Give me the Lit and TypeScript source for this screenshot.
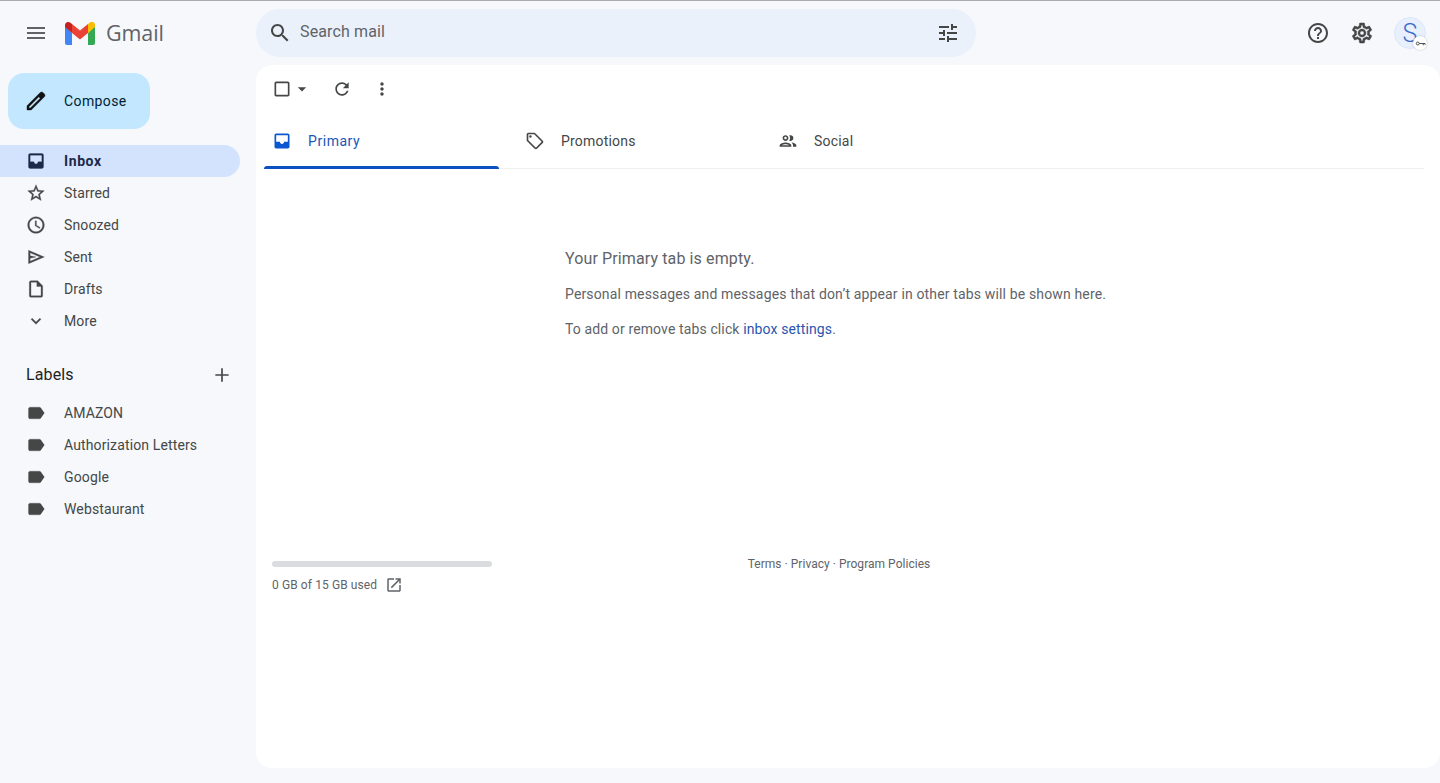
import { LitElement, html, css, svg } from "lit";
import { customElement } from "lit/decorators.js";

const ic = (d: string, size = 24, cls = "") => html`<svg class=${cls} width=${size} height=${size} viewBox="0 0 24 24" fill="currentColor">${svg`<path d=${d}></path>`}</svg>`;

const P = {
  menu: "M3 18h18v-2H3v2zm0-5h18v-2H3v2zm0-7v2h18V6H3z",
  pencil: "M20.41 4.94l-1.35-1.35c-.78-.78-2.05-.78-2.83 0L3 16.82V21h4.18L20.41 7.77c.79-.78.79-2.05 0-2.83zM6.41 19.06L5 19v-1.36l9.82-9.82 1.41 1.41-9.82 9.83z",
  inboxFilled: "M19 3H5c-1.1 0-2 .9-2 2v14c0 1.1.9 2 2 2h14c1.1 0 2-.9 2-2V5c0-1.1-.9-2-2-2zm0 10h-4.5c0 1.38-1.12 2.5-2.5 2.5S9.5 14.38 9.5 13H5V5h14v8z",
  star: "M22 9.24l-7.19-.62L12 2 9.19 8.63 2 9.24l5.46 4.73L5.82 21 12 17.27 18.18 21l-1.63-7.03L22 9.24zM12 15.4l-3.76 2.27 1-4.28-3.32-2.88 4.38-.38L12 6.1l1.71 4.04 4.38.38-3.32 2.88 1 4.28L12 15.4z",
  clock: "M11.99 2C6.47 2 2 6.48 2 12s4.47 10 9.99 10C17.52 22 22 17.52 22 12S17.52 2 11.99 2zM12 20c-4.42 0-8-3.58-8-8s3.58-8 8-8 8 3.58 8 8-3.58 8-8 8zm.5-13H11v6l5.25 3.15.75-1.23-4.5-2.67z",
  send: "M3 4v16l19-8L3 4zm2 3.03L16.85 12 5 16.97V13.5l7-1.5-7-1.5V7.03z",
  draft: "M14 2H6c-1.1 0-2 .9-2 2v16c0 1.1.9 2 2 2h12c1.1 0 2-.9 2-2V8l-6-6zm4 18H6V4h7v5h5v11z",
  chevron: "M7.41 8.59L12 13.17l4.59-4.58L18 10l-6 6-6-6 1.41-1.41z",
  plus: "M20 13h-7v7h-2v-7H4v-2h7V4h2v7h7v2z",
  label: "M17.63 5.84C17.27 5.33 16.67 5 16 5L5 5.01C3.9 5.01 3 5.9 3 7v10c0 1.1.9 1.99 2 1.99L16 19c.67 0 1.27-.33 1.63-.84L22 12l-4.37-6.16z",
  search: "M15.5 14h-.79l-.28-.27C15.41 12.59 16 11.11 16 9.5 16 5.91 13.09 3 9.5 3S3 5.91 3 9.5 5.91 16 9.5 16c1.61 0 3.09-.59 4.23-1.57l.27.28v.79l5 4.99L20.49 19l-4.99-5zm-6 0C7.01 14 5 11.99 5 9.5S7.01 5 9.5 5 14 7.01 14 9.5 11.99 14 9.5 14z",
  tune: "M3 17v2h6v-2H3zM3 5v2h10V5H3zm10 16v-2h8v-2h-8v-2h-2v6h2zM7 9v2H3v2h4v2h2V9H7zm14 4v-2H11v2h10zm-6-4h2V7h4V5h-4V3h-2v6z",
  help: "M11 18h2v-2h-2v2zm1-16C6.48 2 2 6.48 2 12s4.48 10 10 10 10-4.48 10-10S17.52 2 12 2zm0 18c-4.41 0-8-3.59-8-8s3.59-8 8-8 8 3.59 8 8-3.59 8-8 8zm0-14c-2.21 0-4 1.79-4 4h2c0-1.1.9-2 2-2s2 .9 2 2c0 2-3 1.75-3 5h2c0-2.25 3-2.5 3-5 0-2.21-1.79-4-4-4z",
  gear: "M19.43 12.98c.04-.32.07-.64.07-.98 0-.34-.03-.66-.07-.98l2.11-1.65c.19-.15.24-.42.12-.64l-2-3.46c-.09-.16-.26-.25-.44-.25-.06 0-.12.01-.17.03l-2.49 1c-.52-.4-1.08-.73-1.69-.98l-.38-2.65C14.46 2.18 14.25 2 14 2h-4c-.25 0-.46.18-.49.42l-.38 2.65c-.61.25-1.17.59-1.69.98l-2.49-1c-.06-.02-.12-.03-.18-.03-.17 0-.34.09-.43.25l-2 3.46c-.13.22-.07.49.12.64l2.11 1.65c-.04.32-.07.65-.07.98 0 .33.03.66.07.98l-2.11 1.65c-.19.15-.24.42-.12.64l2 3.46c.09.16.26.25.44.25.06 0 .12-.01.17-.03l2.49-1c.52.4 1.08.73 1.69.98l.38 2.65c.03.24.24.42.49.42h4c.25 0 .46-.18.49-.42l.38-2.65c.61-.25 1.17-.59 1.69-.98l2.49 1c.06.02.12.03.18.03.17 0 .34-.09.43-.25l2-3.46c.12-.22.07-.49-.12-.64l-2.11-1.65zm-1.98-1.71c.04.31.05.52.05.73 0 .21-.02.43-.05.73l-.14 1.13.89.7 1.08.84-.7 1.21-1.27-.51-1.04-.42-.9.68c-.43.32-.84.56-1.25.73l-1.06.43-.16 1.13-.2 1.35h-1.4l-.19-1.35-.16-1.13-1.06-.43c-.43-.18-.83-.41-1.23-.71l-.91-.7-1.06.43-1.27.51-.7-1.21 1.08-.84.89-.7-.14-1.13c-.03-.31-.05-.54-.05-.74s.02-.43.05-.73l.14-1.13-.89-.7-1.08-.84.7-1.21 1.27.51 1.04.42.9-.68c.43-.32.84-.56 1.25-.73l1.06-.43.16-1.13.2-1.35h1.39l.19 1.35.16 1.13 1.06.43c.43.18.83.41 1.23.71l.91.7 1.06-.43 1.27-.51.7 1.21-1.07.85-.89.7.14 1.13zM12 8c-2.21 0-4 1.79-4 4s1.79 4 4 4 4-1.79 4-4-1.79-4-4-4zm0 6c-1.1 0-2-.9-2-2s.9-2 2-2 2 .9 2 2-.9 2-2 2z",
  checkbox: "M19 5v14H5V5h14m0-2H5c-1.1 0-2 .9-2 2v14c0 1.1.9 2 2 2h14c1.1 0 2-.9 2-2V5c0-1.1-.9-2-2-2z",
  caret: "M7 10l5 5 5-5z",
  refresh: "M17.65 6.35C16.2 4.9 14.21 4 12 4c-4.42 0-7.99 3.58-7.99 8s3.57 8 7.99 8c3.73 0 6.84-2.55 7.73-6h-2.08c-.82 2.33-3.04 4-5.65 4-3.31 0-6-2.69-6-6s2.69-6 6-6c1.66 0 3.14.69 4.22 1.78L13 11h7V4l-2.35 2.35z",
  more: "M12 8c1.1 0 2-.9 2-2s-.9-2-2-2-2 .9-2 2 .9 2 2 2zm0 2c-1.1 0-2 .9-2 2s.9 2 2 2 2-.9 2-2-.9-2-2-2zm0 6c-1.1 0-2 .9-2 2s.9 2 2 2 2-.9 2-2-.9-2-2-2z",
  tag: "M21.41 11.58l-9-9C12.05 2.22 11.55 2 11 2H4c-1.1 0-2 .9-2 2v7c0 .55.22 1.05.59 1.42l9 9c.36.36.86.58 1.41.58s1.05-.22 1.41-.59l7-7c.37-.36.59-.86.59-1.41s-.23-1.06-.59-1.42zM13 20.01L4 11V4h7v-.01l9 9-7 7.02zM6.5 8A1.5 1.5 0 1 0 6.5 5a1.5 1.5 0 0 0 0 3z",
  people: "M9 13.75c-2.34 0-7 1.17-7 3.5V19h14v-1.75c0-2.33-4.66-3.5-7-3.5zM4.34 17c.84-.58 2.87-1.25 4.66-1.25s3.82.67 4.66 1.25H4.34zM9 12c1.93 0 3.5-1.57 3.5-3.5S10.93 5 9 5 5.5 6.57 5.5 8.5 7.07 12 9 12zm0-5c.83 0 1.5.67 1.5 1.5S9.83 10 9 10s-1.5-.67-1.5-1.5S8.17 7 9 7zm7.04 6.81c1.16.84 1.96 1.96 1.96 3.44V19h4v-1.75c0-2.02-3.5-3.17-5.96-3.44zM15 12c1.93 0 3.5-1.57 3.5-3.5S16.93 5 15 5c-.54 0-1.04.13-1.5.35.63.89 1 1.98 1 3.15s-.37 2.26-1 3.15c.46.22.96.35 1.5.35z",
  open: "M19 19H5V5h7V3H5c-1.1 0-2 .9-2 2v14c0 1.1.9 2 2 2h14c1.1 0 2-.9 2-2v-7h-2v7zM14 3v2h3.59l-9.83 9.83 1.41 1.41L19 6.41V10h2V3h-7z",
};

const NAV: [string, string, boolean][] = [
  ["Inbox", P.inboxFilled, true],
  ["Starred", P.star, false],
  ["Snoozed", P.clock, false],
  ["Sent", P.send, false],
  ["Drafts", P.draft, false],
  ["More", P.chevron, false],
];
const LABELS = ["AMAZON", "Authorization Letters", "Google", "Webstaurant"];

@customElement("app-root")
export class AppRoot extends LitElement {
  static styles = css`
    :host { display: block; height: 783px; overflow: hidden; background: #f6f8fc; font-family: Roboto, "Liberation Sans", sans-serif; color: #444746; font-size: 14px; letter-spacing: 0.13px; }
    .shell { display: grid; grid-template-columns: 256px 1fr; height: 782px; border-top: 1px solid #a9abae; }
    svg { display: block; flex: none; }

    .side { display: flex; flex-direction: column; }
    .brand { display: flex; align-items: center; height: 64px; padding-left: 24px; }
    .menu { color: #5f6368; }
    .logo { margin-left: 17px; }
    .word { margin-left: 11px; font-size: 21.5px; color: #5f6368; letter-spacing: -0.1px; font-family: "Open Sans", Roboto, sans-serif; line-height: 1; padding-bottom: 1px; }
    .compose { display: flex; align-items: center; width: 142px; height: 56px; margin: 8px 0 16px 8px; border-radius: 16px; background: #c2e7ff; color: #001d35; font-weight: 400; padding-left: 16px; box-sizing: border-box; gap: 16px; letter-spacing: 0.4px; }
    .compose svg { color: #111; stroke: currentColor; stroke-width: 0.4; }
    .nav { display: flex; flex-direction: column; }
    .row { display: flex; align-items: center; height: 32px; padding-left: 26px; gap: 18px; width: 240px; box-sizing: border-box; border-radius: 0 16px 16px 0; color: #444746; }
    .row svg { stroke: currentColor; stroke-width: 0.35; }
    .row.active { background: #d3e3fd; color: #1b2a49; font-weight: 700; letter-spacing: 0.6px; }
    .labels-head { display: flex; align-items: center; justify-content: space-between; height: 40px; margin-top: 17px; margin-bottom: 3px; padding: 0 8px 0 26px; width: 240px; box-sizing: border-box; font-size: 16px; color: #1f1f1f; }
    .labels-head svg { color: #444746; margin-top: 2px; }

    .content { display: flex; flex-direction: column; min-width: 0; }
    .top { display: flex; align-items: center; height: 64px; }
    .search { display: flex; align-items: center; width: 720px; height: 48px; border-radius: 24px; background: #eaf1fb; box-sizing: border-box; padding: 0 16px 0 12px; color: #444746; font-size: 16px; }
    .search .ph { flex: 1; margin-left: 8px; color: #5f6368; padding-bottom: 3px; }
    .tools { margin-left: auto; display: flex; align-items: center; gap: 20px; padding-right: 14px; color: #444746; }
    .tools .gear { stroke: currentColor; stroke-width: 0.5; }
    .avatar { position: relative; width: 32px; height: 32px; border-radius: 50%; background: #e8f0fe; color: #3a6bc9; display: flex; align-items: center; justify-content: center; font-size: 25px; font-weight: 300; box-sizing: border-box; border: 1px solid #dde7f8; letter-spacing: 0; }
    .key { position: absolute; right: -2px; bottom: -2px; width: 14px; height: 14px; border-radius: 50%; background: #fff; color: #444; display: flex; align-items: center; justify-content: center; box-shadow: 0 0 2px rgba(60, 64, 67, 0.3); }

    .panel { flex: 1; background: #fff; border-radius: 16px; margin: 0 0 15px 0; padding: 0 8px; display: flex; flex-direction: column; box-sizing: border-box; }
    .bar { display: flex; align-items: center; height: 48px; padding-left: 8px; color: #444746; }
    .bar .b { margin-left: 20px; }
    .bar .c { margin-left: 20px; }
    .tabs { display: flex; height: 56px; border-bottom: 1px solid #f0f0f0; width: 1160px; box-sizing: border-box; }
    .tab { position: relative; width: 253px; display: flex; align-items: center; padding-left: 8px; gap: 16px; color: #444746; box-sizing: border-box; letter-spacing: 0.2px; }
    .tab.on { color: #1a56b8; width: 235px; margin-right: 18px; font-weight: 400; letter-spacing: 0.55px; }
    .tab.on svg { color: #0b57d0; }
    .tab.on::after { content: ""; position: absolute; left: 0; right: 0; bottom: -1px; height: 3px; background: #0b52c0; border-radius: 3px 3px 0 0; }
    .empty { margin: 78px 0 0 301px; color: #5f6368; }
    .empty h2 { margin: 0; font-size: 16px; font-weight: 400; line-height: 24px; letter-spacing: 0.12px; }
    .empty p { margin: 0; line-height: 20px; letter-spacing: 0.15px; }
    .empty p.one { margin-top: 13px; }
    .empty p.two { margin-top: 15px; letter-spacing: 0.12px; }
    .empty a { color: #2a55b0; text-decoration: none; }
    .foot { display: grid; grid-template-columns: 220px 1fr; margin-top: 222px; padding-left: 8px; font-size: 12px; color: #5f6368; }
    .meter { width: 220px; height: 6px; border-radius: 3px; background: #dadce0; }
    .used { display: flex; align-items: center; gap: 8px; margin-top: 8px; height: 20px; letter-spacing: 0.1px; }
    .terms { text-align: center; margin-left: 17px; width: 660px; margin-top: -5px; line-height: 16px; letter-spacing: 0.03px; }
  `;

  render() {
    return html`<div class="shell">
      <aside class="side">
        <div class="brand">
          <span class="menu">${ic(P.menu)}</span>
          <svg class="logo" width="30" height="23" viewBox="0 0 30 23">
            <path fill="#4285f4" d="M0 4v17a2 2 0 0 0 2 2h5V11z"></path>
            <path fill="#34a853" d="M23 11v12h5a2 2 0 0 0 2-2V4z"></path>
            <path fill="#fbbc04" d="M23 2v9l7-6V3c0-3-3.4-4.3-5-2.5z"></path>
            <path fill="#ea4335" d="M7 11V2l8 6.5L23 2v9l-8 6.5z"></path>
            <path fill="#c5221f" d="M0 3v2l7 6V2L5 .5C3.2-.8 0 .4 0 3z"></path>
          </svg>
          <span class="word">Gmail</span>
        </div>
        <div class="compose">${ic(P.pencil)}<span>Compose</span></div>
        <nav class="nav">
          ${NAV.map(([t, d, a]) => html`<div class="row ${a ? "active" : ""}">${ic(d, 20)}<span>${t}</span></div>`)}
        </nav>
        <div class="labels-head"><span>Labels</span>${ic(P.plus, 20)}</div>
        <div class="nav">
          ${LABELS.map((t) => html`<div class="row">${ic(P.label, 20)}<span>${t}</span></div>`)}
        </div>
      </aside>
      <main class="content">
        <header class="top">
          <div class="search">
            ${ic(P.search)}<span class="ph">Search mail</span>${ic(P.tune)}
          </div>
          <div class="tools">
            ${ic(P.help)}${ic(P.gear, 24, "gear")}
            <div class="avatar">S<span class="key"><svg width="11" height="11" viewBox="0 0 12 12" fill="none" stroke="currentColor"><circle cx="3" cy="6" r="1.6"></circle><path d="M4.6 6H11M9 6v2M11 6v1.5"></path></svg></span></div>
          </div>
        </header>
        <section class="panel">
          <div class="bar">
            ${ic(P.checkbox, 20)}${ic(P.caret, 20)}
            <span class="b">${ic(P.refresh, 20)}</span>
            <span class="c">${ic(P.more, 20)}</span>
          </div>
          <div class="tabs">
            <div class="tab on">${ic(P.inboxFilled, 20)}<span>Primary</span></div>
            <div class="tab">${ic(P.tag, 20)}<span>Promotions</span></div>
            <div class="tab">${ic(P.people, 20)}<span>Social</span></div>
          </div>
          <div class="empty">
            <h2>Your Primary tab is empty.</h2>
            <p class="one">Personal messages and messages that don’t appear in other tabs will be shown here.</p>
            <p class="two">To add or remove tabs click <a>inbox settings</a>.</p>
          </div>
          <div class="foot">
            <div>
              <div class="meter"></div>
              <div class="used"><span>0 GB of 15 GB used</span>${ic(P.open, 18)}</div>
            </div>
            <div class="terms">Terms · Privacy · Program Policies</div>
          </div>
        </section>
      </main>
    </div>`;
  }
}
